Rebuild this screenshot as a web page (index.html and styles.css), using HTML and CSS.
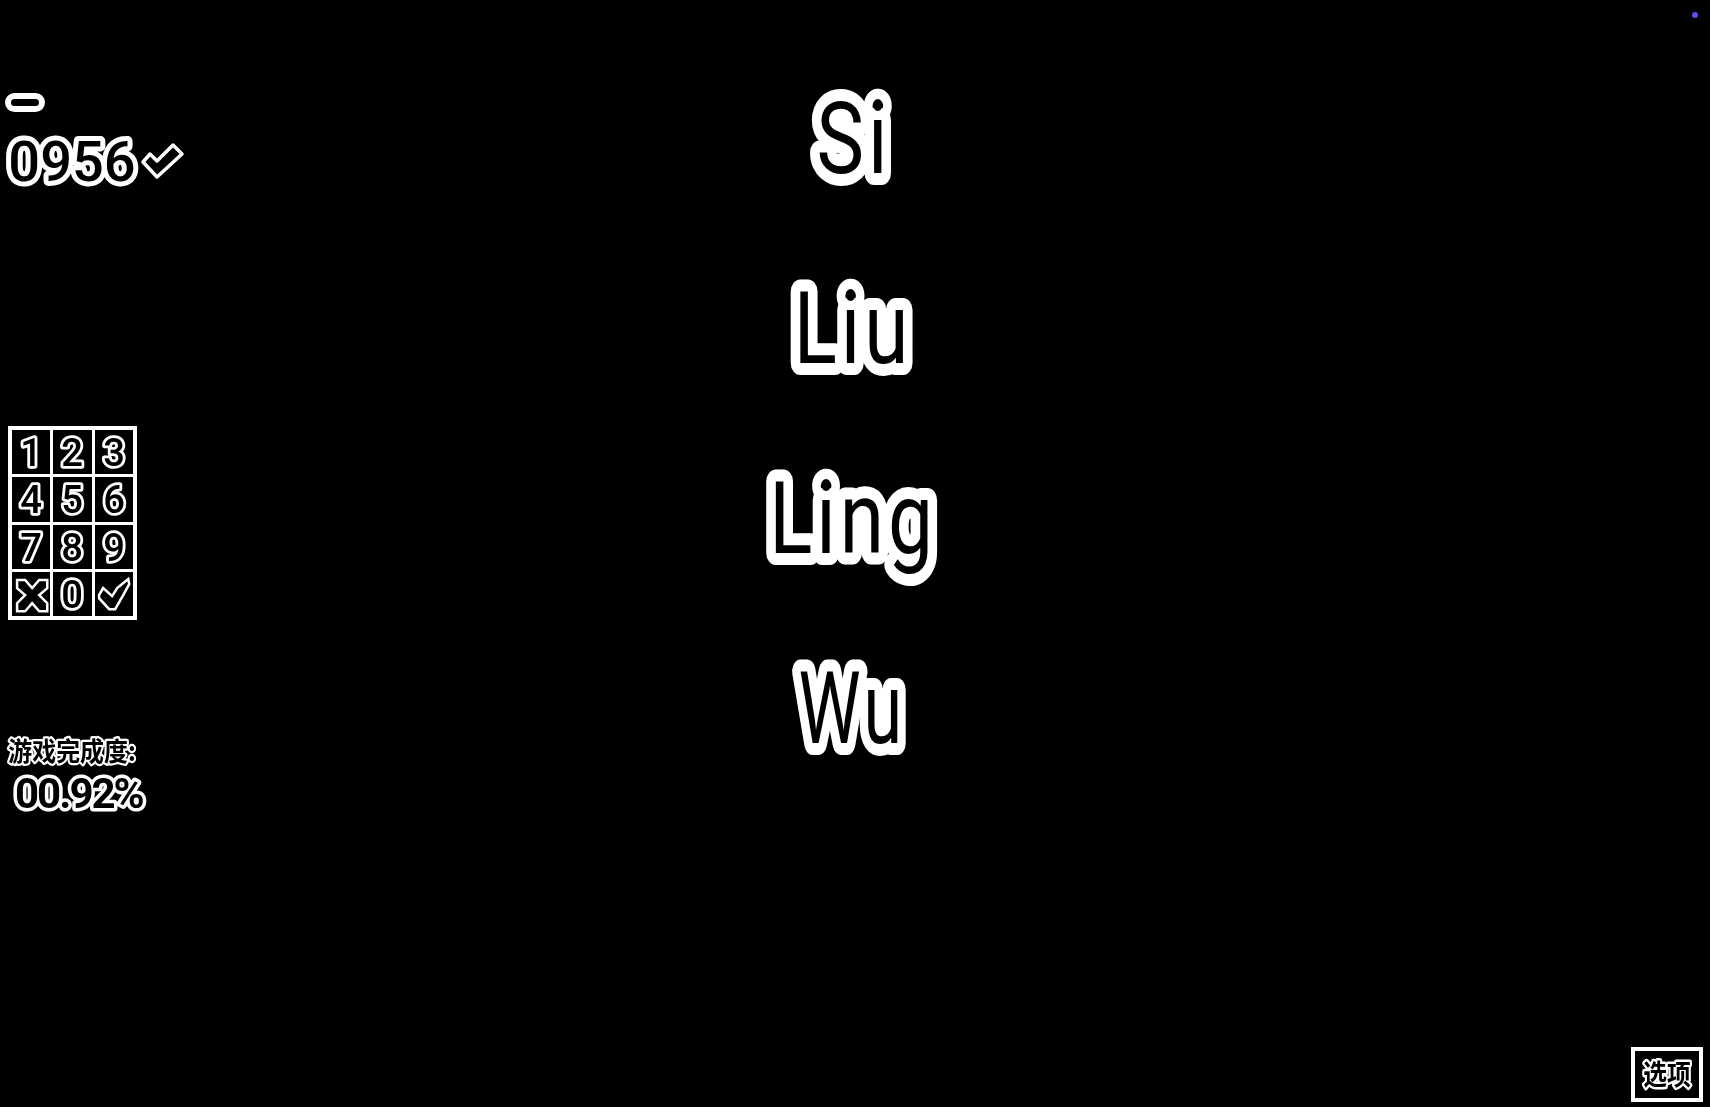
FILE: index.html
```html
<!DOCTYPE html>
<html lang="zh-CN">
<head>
<meta charset="utf-8">
<title>Game</title>
<link rel="stylesheet" href="styles.css">
</head>
<body>
<span class="dot"></span>
<main class="screen">
  <aside class="left">
    <div class="dash"></div>
    <div class="score">
      <svg class="score-num" viewBox="0 0 130 57"><text x="65" y="49">0956</text></svg>
      <svg class="score-check" viewBox="0 0 43 36"><polygon points="2,19 9,11 16,18 32,2 41,11 16,34"/></svg>
    </div>
    <div class="keypad">
      <div class="key"><svg viewBox="0 0 38 44"><text x="19" y="36">1</text></svg></div>
      <div class="key"><svg viewBox="0 0 38 44"><text x="19" y="36">2</text></svg></div>
      <div class="key"><svg viewBox="0 0 38 44"><text x="19" y="36">3</text></svg></div>
      <div class="key"><svg viewBox="0 0 38 44"><text x="19" y="36">4</text></svg></div>
      <div class="key"><svg viewBox="0 0 38 44"><text x="19" y="36">5</text></svg></div>
      <div class="key"><svg viewBox="0 0 38 44"><text x="19" y="36">6</text></svg></div>
      <div class="key"><svg viewBox="0 0 38 44"><text x="19" y="36">7</text></svg></div>
      <div class="key"><svg viewBox="0 0 38 44"><text x="19" y="36">8</text></svg></div>
      <div class="key"><svg viewBox="0 0 38 44"><text x="19" y="36">9</text></svg></div>
      <div class="key"><svg viewBox="2 1 38 44"><polygon points="7,9 15,9 22,17 29,9 37,9 37,17 29,24 37,32 37,40 29,40 22,32 15,40 7,40 7,32 15,24 7,17"/></svg></div>
      <div class="key"><svg viewBox="0 0 38 44"><text x="19" y="36">0</text></svg></div>
      <div class="key"><svg viewBox="3 1 38 44"><polygon points="7,24 11,17 20,25 25,17 36,8 37,13 31,24 23,38 17,38 7,27"/></svg></div>
    </div>
    <svg class="progress-label" viewBox="0 0 132 35"><text x="63" y="28">游戏完成度:</text></svg>
    <svg class="progress-value" viewBox="0 0 140 50"><text x="0" y="38">00.92%</text></svg>
  </aside>
  <section class="names">
    <svg class="name" viewBox="0 0 300 190"><text x="152" y="129">Si</text></svg>
    <svg class="name" viewBox="0 0 300 190"><text x="151" y="129">Liu</text></svg>
    <svg class="name" viewBox="0 0 300 190"><text x="151" y="129">Ling</text></svg>
    <svg class="name name-narrow" viewBox="0 0 300 190"><text x="150" y="129">Wu</text></svg>
  </section>
  <div class="right">
    <button class="options"><svg viewBox="0 0 64 47"><text x="32" y="34">选项</text></svg></button>
  </div>
</main>
</body>
</html>
```

FILE: styles.css
```css
* { box-sizing: border-box; }
html, body { margin: 0; height: 100%; background: #000; overflow: hidden; }
body { font-family: "Roboto", "Noto Sans CJK SC", sans-serif; }

svg { display: block; overflow: visible; }

text {
  fill: #000;
  stroke: #fff;
  stroke-linejoin: round;
  stroke-linecap: round;
  paint-order: stroke fill;
  text-anchor: middle;
}

.dot {
  position: absolute;
  left: 1692px;
  top: 12px;
  width: 6px;
  height: 6px;
  border-radius: 50%;
  background: #5a50f0;
}

.screen {
  display: grid;
  grid-template-columns: 144px 1fr 150px;
  height: 100vh;
  filter: blur(0.5px);
}

.left { padding: 93px 0 0 5px; }

.dash {
  width: 40px;
  height: 19px;
  border: 6px solid #fff;
  border-radius: 10px;
  background: #000;
}

.score {
  display: flex;
  align-items: center;
  gap: 4px;
  margin: 20px 0 0 2px;
  height: 57px;
}

.score-num { width: 130px; height: 57px; flex: none; }
.score-num text {
  font: 500 56px "Roboto", sans-serif;
  letter-spacing: 0;
  stroke-width: 10px;
}

.score-check { width: 43px; height: 36px; flex: none; }
.score-check polygon { fill: #000; stroke: #fff; stroke-width: 3.5; stroke-linejoin: round; }

.keypad {
  display: grid;
  grid-template-columns: repeat(3, 1fr);
  grid-template-rows: repeat(4, 1fr);
  gap: 3px;
  width: 129px;
  height: 194px;
  margin: 237px 0 0 3px;
  padding: 4px;
  background: #fff;
}

.key {
  background: #000;
  overflow: hidden;
}

.key svg { width: 100%; height: 100%; }
.key text {
  font: 500 38px "Roboto", sans-serif;
  stroke-width: 5.5px;
}
.key polygon { fill: #000; stroke: #fff; stroke-width: 2.5; }

.progress-label { width: 132px; height: 35px; margin: 113px 0 0 4px; }
.progress-label text {
  font: 700 26px "Noto Sans CJK SC", sans-serif;
  stroke-width: 4.5px;
  transform-box: fill-box;
  transform-origin: center;
  transform: scaleX(0.92);
}

.progress-value { width: 140px; height: 50px; margin: 2px 0 0 10px; }
.progress-value text {
  font: 700 42px "Roboto", sans-serif;
  letter-spacing: -2px;
  stroke-width: 7px;
  text-anchor: start;
}

.names { padding-top: 44px; }

.name { width: 300px; height: 190px; margin: 0 auto; }
.name text {
  font: 400 100px "Roboto", sans-serif;
  letter-spacing: 5px;
  stroke-width: 24px;
  transform-box: fill-box;
  transform-origin: center;
  transform: scaleX(0.8);
}
.name-narrow text { transform: scaleX(0.7); }

.right {
  display: flex;
  justify-content: flex-end;
  align-items: flex-end;
  padding: 0 7px 5px 0;
}

.options {
  width: 72px;
  height: 55px;
  padding: 0;
  border: 4px solid #fff;
  background: #000;
}
.options svg { width: 100%; height: 100%; }
.options text {
  font: 700 28px "Noto Sans CJK SC", sans-serif;
  stroke-width: 5px;
  transform-box: fill-box;
  transform-origin: center;
  transform: scaleX(0.85);
}
```
